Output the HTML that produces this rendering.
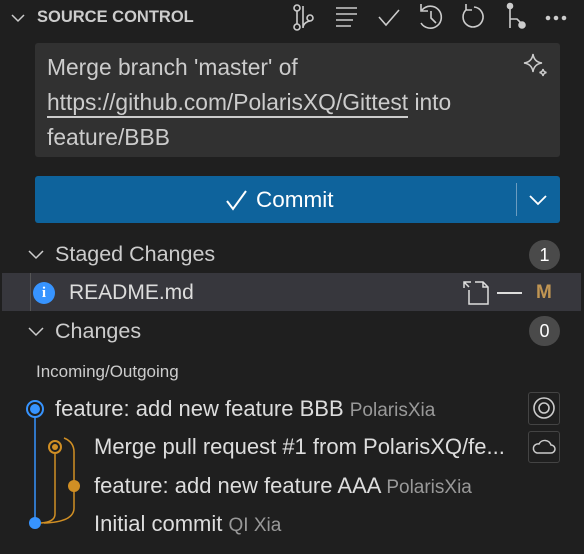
<!DOCTYPE html><html><head><style>
body{margin:0;width:584px;height:554px;background:#1f1f1f;font-family:"Liberation Sans",sans-serif;color:#ccc;position:relative;overflow:hidden}
.a{position:absolute;white-space:nowrap}
svg{position:absolute;overflow:visible}
.badge{position:absolute;width:31px;height:30px;border-radius:15px;background:#4a4a4a;color:#fff;font-size:18px;text-align:center;line-height:30px}
</style></head><body>
<svg style="left:10px;top:10px" width="16" height="16"><path d="M2 5l6 6 6-6" stroke="#ccc" stroke-width="1.5" fill="none"/></svg>
<div class="a" style="left:37px;top:8px;font-size:16.5px;font-weight:bold;color:#ccc">SOURCE CONTROL</div>
<svg style="left:0;top:0" width="584" height="40" fill="none" stroke="#ccc" stroke-width="1.6">
<circle cx="297" cy="8" r="3"/><circle cx="297" cy="27" r="3"/><circle cx="310" cy="18" r="3"/><path d="M297 11v13M303 6v22c0-6 7-7 7-7"/>
<path d="M336 8h21M336 14h21M336 20h17M336 26h15"/>
<path d="M379 17l7 8 13-15"/>
<path d="M422 10a11 11 0 1 1 -1 13M421 4v7h7M431 11v7l5 5"/>
<path d="M467 9a10 10 0 1 0 7 -2M466 4v6h6"/>
<circle cx="510" cy="6" r="2.5" fill="#ccc"/><path d="M510 9v19M510 19h7l5 5"/><circle cx="522" cy="25" r="3" fill="#ccc"/>
<circle cx="548" cy="18" r="1.5" fill="#ccc"/><circle cx="556" cy="18" r="1.5" fill="#ccc"/><circle cx="564" cy="18" r="1.5" fill="#ccc"/>
</svg>
<div class="a" style="left:35px;top:43px;width:525px;height:114px;background:#313131;border-radius:3px"></div>
<div class="a" style="left:47px;top:50px;font-size:22.8px;line-height:35px;color:#ccc">Merge branch 'master' of<br><span style="border-bottom:2px solid #ccc;padding-bottom:1px">https://github.com/PolarisXQ/Gittest</span> into<br>feature/BBB</div>
<svg style="left:523px;top:53px" width="26" height="26" fill="none" stroke="#ccc" stroke-width="1.5"><path d="M10 1q1 8 9 9q-8 1 -9 9q-1 -8 -9 -9q8 -1 9 -9z"/><path d="M20 16q0.5 3 3.5 3.5q-3 0.5 -3.5 3.5q-0.5 -3 -3.5 -3.5q3 -0.5 3.5 -3.5z"/></svg>
<div class="a" style="left:35px;top:176px;width:525px;height:47px;background:#0e639c;border-radius:3px"></div>
<div class="a" style="left:516px;top:183px;width:1px;height:33px;background:#6b9cc0"></div>
<svg style="left:225px;top:189px" width="24" height="22"><path d="M2 12l6 8 13-18" stroke="#fff" stroke-width="2" fill="none"/></svg>
<div class="a" style="left:256px;top:187px;font-size:22.5px;color:#fff">Commit</div>
<svg style="left:529px;top:193px" width="18" height="14"><path d="M1 3l8 8 8-8" stroke="#fff" stroke-width="1.8" fill="none"/></svg>
<svg style="left:27px;top:247px" width="18" height="16"><path d="M2 4l7 7 7-7" stroke="#ccc" stroke-width="1.5" fill="none"/></svg>
<div class="a" style="left:55px;top:242px;font-size:21.5px">Staged Changes</div>
<div class="badge" style="left:529px;top:240px">1</div>
<div class="a" style="left:2px;top:273px;width:579px;height:38px;background:#37373d"></div>
<div class="a" style="left:30px;top:273px;width:1px;height:38px;background:#555"></div>
<div class="a" style="left:33px;top:282px;width:22px;height:22px;border-radius:50%;background:#3794ff;color:#fff;font-size:15px;font-weight:bold;text-align:center;line-height:22px;font-family:'Liberation Serif',serif">i</div>
<div class="a" style="left:69px;top:281px;font-size:21px;color:#ddd">README.md</div>
<svg style="left:462px;top:280px" width="30" height="26" fill="none" stroke="#ddd" stroke-width="1.5"><path d="M7 10v14h19V7l-5-5h-8"/><path d="M21 2v5h5"/><path d="M9 2H2v6M2 2l5 5"/></svg>
<div class="a" style="left:497px;top:292px;width:25px;height:2px;background:#ddd"></div>
<div class="a" style="left:536px;top:282px;font-size:19px;font-weight:bold;color:#c09553">M</div>
<svg style="left:27px;top:324px" width="18" height="16"><path d="M2 4l7 7 7-7" stroke="#ccc" stroke-width="1.5" fill="none"/></svg>
<div class="a" style="left:55px;top:319px;font-size:21.5px">Changes</div>
<div class="badge" style="left:529px;top:316px">0</div>
<div class="a" style="left:36px;top:362px;font-size:17px;color:#ccc">Incoming/Outgoing</div>
<svg style="left:0;top:390px" width="90" height="150" fill="none">
<path d="M35 26v107" stroke="#3794ff" stroke-width="1.5"/>
<circle cx="35" cy="19" r="8" stroke="#3794ff" stroke-width="2"/><circle cx="35" cy="19" r="5" fill="#3794ff"/>
<circle cx="35" cy="133" r="6" fill="#3794ff"/>
<path d="M55 64v60q0 8 -14 9M64 48q10 4 10 14v56q0 14 -30 15" stroke="#d18f24" stroke-width="1.5"/>
<circle cx="55" cy="57" r="6" stroke="#d18f24" stroke-width="2"/><circle cx="55" cy="57" r="3" fill="#d18f24"/>
<circle cx="74" cy="96" r="6" fill="#d18f24"/>
</svg>
<div class="a" style="left:55px;top:396px;font-size:22px;color:#ddd">feature: add new feature BBB <span style="font-size:19px;color:#999">PolarisXia</span></div>
<div class="a" style="left:94px;top:434px;font-size:22px;color:#ddd">Merge pull request #1 from PolarisXQ/fe...</div>
<div class="a" style="left:94px;top:473px;font-size:22px;color:#ddd">feature: add new feature AAA <span style="font-size:19px;color:#999">PolarisXia</span></div>
<div class="a" style="left:94px;top:511px;font-size:22px;color:#ddd">Initial commit <span style="font-size:19px;color:#999">QI Xia</span></div>
<div class="a" style="left:528px;top:392px;width:30px;height:31px;border:1px solid #444;border-radius:3px"></div>
<svg style="left:529px;top:393px" width="30" height="31" fill="none" stroke="#ccc" stroke-width="1.6"><circle cx="15" cy="15" r="10"/><circle cx="15" cy="15" r="5"/></svg>
<div class="a" style="left:528px;top:431px;width:30px;height:30px;border:1px solid #444;border-radius:3px"></div>
<svg style="left:529px;top:432px" width="30" height="30" fill="none" stroke="#ccc" stroke-width="1.5"><path d="M8 21h14a4 4 0 0 0 0-8a6.5 6.5 0 0 0-12-1a4.5 4.5 0 0 0-2 9z"/></svg>
</body></html>
